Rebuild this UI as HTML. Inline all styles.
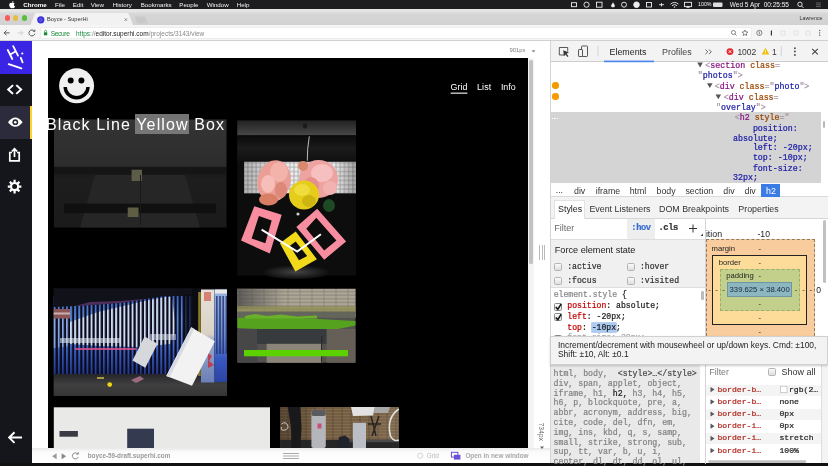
<!DOCTYPE html>
<html><head><meta charset="utf-8"><title>Boyce - SuperHi</title>
<style>
*{box-sizing:border-box;margin:0;padding:0}
html,body{width:828px;height:466px;overflow:hidden;background:#fff}
body{position:relative;will-change:transform;font-family:"Liberation Sans",sans-serif;color:#222}
.a{position:absolute}
.t{position:absolute;white-space:nowrap;line-height:1;font-family:"Liberation Sans",sans-serif}
.m{position:absolute;white-space:pre;line-height:1;font-family:"Liberation Mono",monospace;-webkit-text-stroke:.22px}
.b{font-weight:bold}
svg{position:absolute;overflow:visible}
</style></head><body>
<!-- macOS menu bar -->
<div class="a" style="left:0;top:0;width:828px;height:9.3px;background:#1d1d1f"></div>
<svg style="left:9.3px;top:1.2px" width="6" height="7" viewBox="0 0 14 17"><path fill="#fff" d="M11.6 9c0-2 1.700-3 1.800-3.100-1-1.400-2.500-1.600-3-1.600-1.300-.1-2.500.8-3.200.8-.7 0-1.700-.7-2.800-.7C3 4.400 1.700 5.200 1 6.500-.6 9.200.6 13.200 2.100 15.400c.8 1.100 1.600 2.300 2.800 2.200 1.100 0 1.500-.7 2.900-.7 1.300 0 1.700.7 2.900.7 1.200 0 2-1.100 2.700-2.200.9-1.200 1.200-2.500 1.200-2.500s-2.900-.9-3-3.900zM9.400 2.900C10 2.100 10.400 1.100 10.300 0c-.9 0-2 .6-2.600 1.300-.6.700-1.100 1.700-.9 2.700 1 .1 2-.5 2.600-1.100z"/></svg>
<span class="t b" style="left:23.3px;top:1.5px;font-size:6.2px;color:#fff">Chrome</span>
<span class="t" style="left:55px;top:1.5px;font-size:6.2px;color:#f2f2f2">File</span>
<span class="t" style="left:72.700px;top:1.5px;font-size:6.2px;color:#f2f2f2">Edit</span>
<span class="t" style="left:90.700px;top:1.5px;font-size:6.2px;color:#f2f2f2">View</span>
<span class="t" style="left:112.700px;top:1.5px;font-size:6.2px;color:#f2f2f2">History</span>
<span class="t" style="left:140.700px;top:1.5px;font-size:6.2px;color:#f2f2f2">Bookmarks</span>
<span class="t" style="left:179.300px;top:1.5px;font-size:6.2px;color:#f2f2f2">People</span>
<span class="t" style="left:206.700px;top:1.5px;font-size:6.2px;color:#f2f2f2">Window</span>
<span class="t" style="left:236.700px;top:1.5px;font-size:6.2px;color:#f2f2f2">Help</span>
<!-- menubar right icons -->
<svg style="left:570px;top:0" width="258" height="9.3" viewBox="0 0 258 9.3">
<g fill="none" stroke="#eee" stroke-width="0.9">
<rect x="1.500" y="2.700" width="5" height="4"/><circle cx="16.500" cy="4.700" r="2.600"/><rect x="26.500" y="2.200" width="5.500" height="5"/>
<path d="M42 7.300c-2-1.500 0-3 1-5 1 2 3 3.500 1 5z" fill="#eee" stroke="none"/>
<circle cx="54" cy="4.700" r="2.500"/><circle cx="66.500" cy="4.700" r="2.800" fill="#eee"/><rect x="76.500" y="2.500" width="5" height="4.500"/>
<path d="M89 4.700h5M91.500 3v3.500"/>
<path d="M100.500 4.200a5.500 5.500 0 0 1 8 0M102 5.700a3.500 3.500 0 0 1 5 0"/><circle cx="104.500" cy="7" r=".7" fill="#eee" stroke="none"/>
<rect x="114.500" y="2.300" width="7" height="4.300"/><path d="M116 7.800l2-2 2 2z" fill="#eee" stroke="none"/>
<rect x="143" y="2.500" width="9.500" height="4.500" rx="1" fill="#ddd" stroke="none"/>
<circle cx="230" cy="4.300" r="2.200"/><path d="M231.600 6l1.800 1.800"/>
<path d="M246 3h5M246 4.800h5M246 6.600h5" stroke="#666"/>
</g></svg>
<span class="t" style="left:698px;top:2px;font-size:5.300px;color:#f2f2f2">100%</span>
<span class="t" style="left:729.800px;top:1.900px;font-size:6.500px;color:#f2f2f2">Wed 5 Apr&nbsp; 00:25:55</span>

<!-- tab strip -->
<div class="a" style="left:0;top:9.300px;width:828px;height:16.200px;background:linear-gradient(#e7e7e7 0,#e2e2e2 18%,#d6d6d6 30%,#d2d2d2)"></div>
<div class="a" style="left:7.200px;top:18px;width:5.400px;height:5.400px;margin:-2.700px;border-radius:50%;background:#fc5b57"></div>
<div class="a" style="left:15.700px;top:18px;width:5.400px;height:5.400px;margin:-2.700px;border-radius:50%;background:#e5bf3c"></div>
<div class="a" style="left:24.500px;top:18px;width:5.400px;height:5.400px;margin:-2.700px;border-radius:50%;background:#57c038"></div>
<svg style="left:30px;top:12.500px" width="120" height="13" viewBox="0 0 120 13">
<path d="M0 13 L4.500 1.500 Q5 0 6.500 0 H97 Q98.500 0 99 1.500 L103.500 13 Z" fill="#f2f2f2"/>
<path d="M104.700 3.500h10.500l2.500 7h-10.500z" fill="#c9c9c9"/>
<circle cx="10.800" cy="6.800" r="3.600" fill="#3a30d8"/><circle cx="10.800" cy="6.800" r="1.300" fill="none" stroke="#8f8af0" stroke-width=".6"/>
<path d="M94.600 5.400l2.400 2.400M97 5.400l-2.400 2.400" stroke="#666" stroke-width=".7"/>
</svg>
<span class="t" style="left:47px;top:17.400px;font-size:5.600px;color:#333">Boyce - SuperHi</span>
<span class="t" style="left:799.600px;top:16.300px;font-size:5.300px;color:#333">Lawrence</span>

<!-- toolbar -->
<div class="a" style="left:0;top:25.400px;width:828px;height:15.800px;background:#f5f5f5;border-bottom:1px solid #d0d0d0"></div>
<div class="a" style="left:39.500px;top:27.300px;width:712px;height:11.600px;background:#fff;border-radius:2px;border:.5px solid #ededed"></div>
<svg style="left:0;top:25.400px" width="828" height="15.800" viewBox="0 0 828 15.800">
<g fill="none" stroke="#5a5a5a" stroke-width="1">
<path d="M9.500 7.900H4M6.500 5.400L4 7.900l2.500 2.500"/>
<path d="M17.500 7.900H23M20.500 5.400L23 7.900l-2.500 2.500" stroke="#d0d0d0"/>
<path d="M34.300 6.200A3 3 0 1 0 34.800 8.600" /><path d="M35.200 4.200v2.600h-2.600z" fill="#5a5a5a" stroke="none"/>
</g>
<rect x="43.800" y="7.300" width="3.400" height="3" fill="#1a8a3a"/><path d="M44.500 7.300V6.300a1 1 0 0 1 2 0v1" fill="none" stroke="#1a8a3a" stroke-width=".7"/>
<g fill="none" stroke="#666" stroke-width=".8">
<circle cx="733.500" cy="7.500" r="2"/><path d="M735 9l1.600 1.600"/>
<path d="M745 5l.9 1.900 2 .2-1.500 1.400.4 2-1.800-1-1.800 1 .4-2-1.500-1.400 2-.2z"/>
<circle cx="759.400" cy="7.900" r="2.600"/><path d="M759.400 6.400v3"/>
<path d="M771.500 5.500v5" stroke="#333" stroke-width="1.200"/>
<rect x="781" y="6" width="4" height="4" stroke="#ddd"/><rect x="794" y="6" width="4" height="4" stroke="#e0e0e0"/><rect x="806" y="6" width="4" height="4" stroke="#ddd"/>
</g>
<g fill="#666"><circle cx="819.700" cy="5.500" r=".7"/><circle cx="819.700" cy="7.900" r=".7"/><circle cx="819.700" cy="10.300" r=".7"/></g>
</svg>
<span class="t" style="left:50.700px;top:30.600px;font-size:6.600px;letter-spacing:-.35px;color:#1a8a3a">Secure</span>
<span class="t" style="left:76px;top:30.600px;font-size:6.500px;color:#888"><span style="color:#1a8a3a">https</span>://<span style="color:#222">editor.superhi.com</span>/projects/3143/view</span>
<!-- sidebar -->
<div class="a" style="left:0;top:41.200px;width:32px;height:425px;background:#15151c"></div>
<div class="a" style="left:0;top:41.200px;width:32px;height:32.800px;background:#3a25e4"></div>
<div class="a" style="left:0;top:106.200px;width:32px;height:32.800px;background:#2b2b3b"></div>
<div class="a" style="left:29.500px;top:106.200px;width:2.500px;height:32.800px;background:#ffd22e"></div>
<svg style="left:0;top:41.200px" width="32" height="425" viewBox="0 0 32 425">
<!-- Hi logo -->
<g stroke="#fff" stroke-width="1.800" stroke-linecap="round" fill="none">
<path d="M7.800 9L12.300 18M13.200 5.100L18 14.600M9.900 13.800L15.800 10.200M20.800 16.800L22.600 21.400"/>
<path d="M8.700 23.200L21.400 27.400"/>
</g><circle cx="22.300" cy="12.500" r="1.100" fill="#fff"/>
<!-- code icon -->
<g stroke="#fff" stroke-width="2" fill="none" stroke-linecap="square" stroke-linejoin="miter">
<path d="M12.300 44.800L8.200 48.500l4.100 3.700M17 44.800l4.100 3.700-4.100 3.700"/></g>
<!-- eye -->
<path d="M8 81.200Q15.300 72 22.600 81.200Q15.300 90.400 8 81.200z" fill="#fff"/><circle cx="15.300" cy="81.200" r="2.900" fill="#2b2b3b"/><circle cx="15.300" cy="81.200" r="1.300" fill="#fff"/>
<!-- share -->
<g stroke="#fff" stroke-width="1.700" fill="none"><path d="M12 111.500H9.800v8.300h9.400v-8.300H17"/><path d="M14.500 116V107.800M11.800 110.500l2.700-2.700 2.700 2.700"/></g>
<!-- gear -->
<g transform="translate(14.600 145.600)"><circle r="3.600" fill="none" stroke="#fff" stroke-width="2.200"/>
<g stroke="#fff" stroke-width="2.200"><path d="M0-6.800v2.500M0 6.800v-2.500M-6.800 0h2.500M6.800 0h-2.500M-4.800-4.800l1.800 1.800M4.800 4.800l-1.800-1.800M-4.800 4.800l1.800-1.800M4.800-4.800l-1.800 1.800"/></g></g>
<!-- back arrow -->
<g stroke="#fff" stroke-width="2" fill="none"><path d="M22 396.600H9.500M14.500 391.300l-5.300 5.300 5.300 5.300"/></g>
</svg>
<!-- preview pane -->
<div class="a" style="left:32px;top:41.200px;width:518.500px;height:425px;background:#fff"></div>
<div class="a" style="left:550.300px;top:41.200px;width:1px;height:425px;background:#d4d4d4"></div>
<span class="t" style="left:509.500px;top:47.500px;font-size:5.900px;color:#7a7a7a">901px</span>
<svg style="left:525.200px;top:46.800px" width="12" height="8"><path d="M6.500 3.200h4l-2 2.300z" fill="#888"/></svg>
<!-- scrollbar -->
<div class="a" style="left:528px;top:58px;width:6px;height:390px;background:#f4f4f4"></div>
<div class="a" style="left:529.400px;top:59.700px;width:3.300px;height:204px;background:#c2c2c2;border-radius:1.600px"></div>
<!-- resize handle -->
<div class="a" style="left:539.200px;top:244.700px;width:1.200px;height:15.500px;background:#bbb"></div>
<div class="a" style="left:541.500px;top:244.700px;width:1.200px;height:15.500px;background:#bbb"></div>
<div class="a" style="left:543.800px;top:244.700px;width:1.200px;height:15.500px;background:#bbb"></div>
<span class="t" style="left:541.300px;top:431.900px;font-size:6.300px;letter-spacing:.25px;color:#666;transform:translate(-50%,-50%) rotate(90deg)">734px</span>
<svg style="left:538px;top:444.600px;z-index:3" width="8" height="6"><path d="M2 1.500h4l-2 2.500z" fill="#666"/></svg>

<div class="a" style="left:48px;top:57.700px;width:479.700px;height:390.300px;background:#000;overflow:hidden" id="pg">
<svg style="left:-48px;top:-57.700px" width="828" height="466" viewBox="0 0 828 466">
<defs>
<linearGradient id="g1" x1="0" y1="0" x2="0" y2="1"><stop offset="0" stop-color="#343434"/><stop offset=".43" stop-color="#2c2c2c"/><stop offset=".46" stop-color="#161616"/><stop offset=".56" stop-color="#1e1e1e"/><stop offset="1" stop-color="#1a1a1a"/></linearGradient>
<linearGradient id="gmon" x1="0" y1="0" x2="0" y2="1"><stop offset="0" stop-color="#222"/><stop offset=".75" stop-color="#3e3e3e"/><stop offset="1" stop-color="#4a4a4a"/></linearGradient>
<linearGradient id="gdesk" x1="0" y1="0" x2="0" y2="1"><stop offset="0" stop-color="#0a0a0a"/><stop offset=".5" stop-color="#1b1b1b"/><stop offset="1" stop-color="#101010"/></linearGradient>
<radialGradient id="gglow"><stop offset="0" stop-color="#444"/><stop offset="1" stop-color="#0d0d0d"/></radialGradient>
<linearGradient id="kfade" x1="0" y1="0" x2="1" y2="0"><stop offset="0" stop-color="#000" stop-opacity=".25"/><stop offset=".3" stop-color="#000" stop-opacity="0"/><stop offset=".8" stop-color="#000" stop-opacity="0"/><stop offset="1" stop-color="#000" stop-opacity=".3"/></linearGradient>
<linearGradient id="gfence" x1="0" y1="0" x2="0" y2="1"><stop offset="0" stop-color="#3d68c0"/><stop offset=".3" stop-color="#5b8ad8"/><stop offset=".6" stop-color="#4a72d0"/><stop offset=".75" stop-color="#3558b8"/><stop offset="1" stop-color="#22388a"/></linearGradient>
<pattern id="bars" width="4.100" height="10" patternUnits="userSpaceOnUse" x="53.700"><rect x="1.900" width="2.200" height="10" fill="#0a0a1c"/></pattern>
<pattern id="bars2" width="3.200" height="10" patternUnits="userSpaceOnUse" x="214.400"><rect x="1.600" width="1.600" height="10" fill="#20306a" opacity=".8"/></pattern>
<linearGradient id="gground" x1="0" y1="0" x2="0" y2="1"><stop offset="0" stop-color="#26262a"/><stop offset=".5" stop-color="#404040"/><stop offset="1" stop-color="#343434"/></linearGradient>
<linearGradient id="gpillar" x1="0" y1="0" x2="0" y2="1"><stop offset="0" stop-color="#e6e0da"/><stop offset=".48" stop-color="#d9d2c4"/><stop offset=".55" stop-color="#9aa8c8"/><stop offset="1" stop-color="#6a80b8"/></linearGradient>
<linearGradient id="gdoor" x1="0" y1="0" x2="0" y2="1"><stop offset="0" stop-color="#9ab4e0"/><stop offset=".5" stop-color="#6a8ad0"/><stop offset=".75" stop-color="#3858c0"/><stop offset="1" stop-color="#2a44a0"/></linearGradient>
<pattern id="stripes" width="3.900" height="10" patternUnits="userSpaceOnUse"><rect width="3.900" height="10" fill="#1c2f8a"/><rect x="0" width="1.900" height="10" fill="#c9d4ea"/></pattern>
<pattern id="stripes2" width="3.900" height="10" patternUnits="userSpaceOnUse"><rect width="3.900" height="10" fill="#14143a"/><rect x="0" width="1.700" height="10" fill="#3a62c8"/></pattern>
<pattern id="keys" width="4.200" height="4.400" patternUnits="userSpaceOnUse"><rect width="4.200" height="4.400" fill="#9c9c9c"/><rect x=".35" y=".35" width="3.500" height="3.700" fill="#ececec"/></pattern>
<pattern id="brick" width="9" height="3" patternUnits="userSpaceOnUse"><rect width="9" height="3" fill="#5c4a36"/><rect x=".4" y=".4" width="8.200" height="2.200" fill="#866c4c"/></pattern>
<pattern id="brick2" width="12" height="3.600" patternUnits="userSpaceOnUse"><rect width="12" height="3.600" fill="#87827a"/><rect x=".4" y=".5" width="11.200" height="2.600" fill="#aea796"/></pattern>
<linearGradient id="bshade" x1="0" y1="0" x2="1" y2="0"><stop offset="0" stop-color="#000" stop-opacity=".3"/><stop offset=".35" stop-color="#000" stop-opacity="0"/><stop offset="1" stop-color="#fff" stop-opacity=".08"/></linearGradient>
<linearGradient id="fade" x1="0" y1="0" x2="1" y2="0"><stop offset="0" stop-color="#444" stop-opacity=".75"/><stop offset=".4" stop-color="#444" stop-opacity="0"/></linearGradient>
</defs>
<!-- smiley -->
<circle cx="76.600" cy="85.800" r="17.500" fill="#f0f0f0"/>
<circle cx="70.700" cy="80.400" r="3" fill="#000"/><circle cx="81.400" cy="80.400" r="3" fill="#000"/>
<path d="M63.500 87A13.100 12.400 0 0 0 89.700 87H86.300A9.700 9 0 0 1 66.900 87Z" fill="#000"/>
<!-- nav -->
<rect x="450.600" y="92.600" width="16.800" height="1.100" fill="#fff"/>

<!-- photo1 dark -->
<rect x="54" y="119.500" width="172.500" height="108" fill="url(#g1)"/>

<rect x="54" y="167" width="172.500" height="7" fill="#151515"/><path d="M95 175H185L200 227.500H80Z" fill="#262626"/>
<rect x="64" y="203.600" width="152" height="9.500" fill="#101010"/>
<rect x="131.600" y="169.700" width="10.400" height="11.300" fill="#5c5c49"/>
<rect x="127.700" y="207.500" width="10.800" height="9.500" fill="#5f5e45"/>
<rect x="140" y="175" width="1" height="50" fill="#1a1a1a"/>

<!-- photo2 flowers -->
<rect x="237.300" y="120.500" width="118.700" height="155.100" fill="#0d0d0d"/>
<rect x="237.300" y="120.500" width="118.700" height="14.800" fill="url(#gmon)"/>
<rect x="237.300" y="135.300" width="118.700" height="26" fill="url(#gdesk)"/>
<ellipse cx="305" cy="126" rx="2.200" ry="2.600" fill="#1a1a1a"/>
<ellipse cx="296" cy="272" rx="34" ry="7" fill="url(#gglow)"/>
<rect x="244.100" y="161.800" width="111.900" height="31.500" fill="url(#keys)"/>
<rect x="244.100" y="161.800" width="111.900" height="31.500" fill="url(#kfade)"/>
<path d="M309.300 136.300Q307 150 307.300 160.700" stroke="#cfcfcf" stroke-width=".9" fill="none"/>
<ellipse cx="329" cy="205.500" rx="6" ry="6.500" fill="#1d4a24"/>
<ellipse cx="274" cy="181" rx="16.500" ry="21" fill="#ea9e95" transform="rotate(12 274 181)"/>
<ellipse cx="268.500" cy="199.500" rx="9.500" ry="6" fill="#d97f66"/>
<ellipse cx="279" cy="172" rx="9" ry="10" fill="#f3b3ab"/>
<ellipse cx="268" cy="184" rx="7" ry="9" fill="#f6bdb9"/>
<ellipse cx="281" cy="190" rx="6" ry="8" fill="#dd8878"/>
<ellipse cx="318.500" cy="179" rx="19.500" ry="19" fill="#eda3a0"/>
<ellipse cx="322" cy="173" rx="11" ry="9" fill="#f6c0c0"/>
<ellipse cx="311" cy="186" rx="8" ry="9" fill="#e58f8a"/>
<ellipse cx="330" cy="188" rx="7" ry="7" fill="#f2b2b0"/>
<ellipse cx="303" cy="166" rx="5" ry="5" fill="#d98a6e"/>
<ellipse cx="304" cy="195" rx="15" ry="14.500" fill="#e6cd1a"/>
<ellipse cx="302" cy="190" rx="8" ry="6" fill="#f0dc3c"/>
<ellipse cx="309" cy="201" rx="7" ry="6" fill="#cdb410"/>
<circle cx="298" cy="214" r="1.600" fill="#ccc"/>
<path fill="#f2d91a" fill-rule="evenodd" d="M295.700 231.500L316.900 259.200L295.400 271.600L279.900 243.300ZM295.700 241.500L307.200 256.100L299 260.300L289.900 245.700Z"/>
<path fill="#f88da0" fill-rule="evenodd" d="M254.300 206.300L281.700 214.700L269.800 253.400L241 240.600ZM258.900 216L271.700 220.500L265.300 243.300L251.600 238.400Z"/>
<path fill="#f88da0" fill-rule="evenodd" d="M317.200 208.700L346.100 241.500L324.200 259.700L296.300 226.900ZM316.300 217.800L336.400 240.600L324.200 250.600L306.300 228.700Z"/>
<path d="M261.600 229.700L297.200 251.500L320.900 234.200" fill="none" stroke="#fff" stroke-width="2" stroke-linejoin="miter"/>

<!-- photo3 graffiti -->
<rect x="53.700" y="288.400" width="173.300" height="107.600" fill="#11111a"/>
<rect x="53.700" y="296" width="138.500" height="78.500" fill="url(#gfence)"/>
<path d="M70 322L98 312L140 302L165 297L172 297L176 330L170 344L140 347L100 346L70 344Z" fill="#e4ecf8" opacity=".85"/>
<path d="M53.700 318L70 316V346L53.700 348Z" fill="#9db8e6" opacity=".7"/>
<rect x="53.700" y="296" width="138.500" height="78.500" fill="url(#bars)"/>
<path d="M53.700 288.400H192.200V295.500L165 296L120 303L75 306L53.700 307Z" fill="#11111a"/>
<path d="M75 306L120 303L150 298.500L120 301L90 302Z" fill="#6a3a78" opacity=".7"/>
<rect x="183.600" y="294" width="8.600" height="82" fill="#0c0c18" opacity=".75"/>
<rect x="53.700" y="374" width="173.300" height="22" fill="url(#gground)"/>
<rect x="53.700" y="309" width="16.300" height="9.500" fill="#8d5656"/>
<rect x="53.700" y="312.500" width="16.300" height="2" fill="#c9b0b0"/>
<rect x="192.200" y="288.400" width="6" height="88" fill="#0b0b12"/>
<rect x="198.200" y="292" width="2.600" height="84" fill="#8a7a2a"/>
<rect x="201" y="289.500" width="13.400" height="93" fill="url(#gpillar)"/>
<rect x="204" y="292" width="7" height="9" fill="#d06a5a" opacity=".8"/>
<rect x="214.400" y="289.500" width="12.600" height="92.500" fill="url(#gdoor)"/>
<rect x="214.400" y="296" width="12.600" height="58" fill="url(#bars2)"/>
<rect x="215" y="289.500" width="12" height="4" fill="#e8e8e8"/>
<path d="M208 353l4 3-3 5 5 4-6 3z" fill="#c83040" opacity=".85"/>
<rect x="60" y="338" width="60" height="5" fill="#e8eef8" opacity=".55"/><rect x="150" y="334" width="26" height="6" fill="#e8eef8" opacity=".5"/>
<rect x="74.900" y="348.200" width="61" height="1.600" fill="#e3508c"/>
<path d="M144.600 336.600L157.500 343.800L145.300 367.800L132.500 360.500Z" fill="#d6d8dc"/>
<path d="M191.300 327.300L214.900 341.200L192 385.700L166.300 376Z" fill="#f2f2f2"/>
<path d="M191.300 327.300L194.300 329L169.600 377.300L166.300 376Z" fill="#d9dbe2"/>
<circle cx="109.700" cy="384.600" r="3.300" fill="#3a3a2a"/><circle cx="109.700" cy="384.600" r="2.400" fill="#f0d41c"/>
<rect x="97" y="377" width="7" height="2" fill="#a89a40"/>
<path d="M131 380l9-4 4 3-8 4z" fill="#9a6a80"/>

<!-- photo4 grass -->
<rect x="237.300" y="288.800" width="118.200" height="73.900" fill="#54524f"/>
<rect x="237.300" y="288.800" width="118.200" height="29" fill="url(#brick2)"/>
<rect x="237.300" y="288.800" width="118.200" height="20" fill="url(#fade)"/>
<rect x="237.300" y="306" width="118.200" height="6" fill="#8f8c52" opacity=".75"/>
<rect x="237.300" y="311.500" width="118.200" height="6.500" fill="#5d5f55" opacity=".9"/>
<path d="M237.300 318L262 316.500L300 318L355.500 321V325.500L338 329L280 330L237.300 328Z" fill="#55a21e"/>
<path d="M245 316l10-2 12 2 14-1.500 16 2 20-1v3H245z" fill="#6ab02a"/>
<rect x="237.300" y="329" width="20" height="33.700" fill="#474747"/>
<rect x="326.500" y="329" width="29" height="33.700" fill="#665f58"/>
<rect x="257" y="329" width="69.500" height="15" fill="#373b3d"/>
<rect x="266.700" y="343.800" width="56" height="19" fill="#8b8579"/>
<rect x="321" y="336" width="1.500" height="26.700" fill="#2a2a2a"/>
<rect x="244" y="350" width="104" height="6.300" fill="#5bd200"/>

<!-- photo5 wall -->
<rect x="53.800" y="407.300" width="216.200" height="41" fill="#e9e9e8"/>
<rect x="127.200" y="428.700" width="26.800" height="20" fill="#343a4f"/>
<rect x="59.500" y="431" width="18.400" height="5.700" fill="#3a3a44"/>
<!-- photo6 brick -->
<rect x="280.100" y="407" width="118.700" height="41" fill="url(#brick)"/>
<rect x="280.100" y="407" width="118.700" height="41" fill="url(#bshade)"/>
<rect x="280.100" y="439.700" width="118.700" height="8.300" fill="#262626"/>
<rect x="340" y="439.700" width="58.800" height="2.500" fill="#4a4a4a"/>
<path d="M281.500 424q4-3 6 1t-3 5q-4 1-3-3" stroke="#c8c8c8" stroke-width="1" fill="none"/>
<path d="M287.800 407H300.400L301.500 428L300.300 448H291.500L291 428Z" fill="#19191b"/>
<rect x="311.400" y="410" width="14.400" height="38" rx="2" fill="#b4b6bb"/>
<rect x="311.400" y="410" width="14.400" height="6" rx="2" fill="#5a5c60"/>
<rect x="317.500" y="423.500" width="4" height="5" fill="#c8507a"/>
<rect x="352.900" y="422.800" width="13.100" height="25.200" fill="#bcbec6"/>
<path d="M351 407H375L373 415.500L353 416Z" fill="#e2e2e2"/>
<path d="M375 407H390L388 413H374Z" fill="#a8a8a8"/>
<path d="M337.600 448L339 437L345 435.500L349.500 439V448Z" fill="#20222c"/>
<path d="M371 416L376 436M379 416L372 436M368 424H381" stroke="#2a2420" stroke-width="1.500" fill="none"/>
<path d="M398.800 409Q386 418 390.500 436Q393.500 442 398.800 440" stroke="#e0e0e0" stroke-width="1.600" fill="none"/>
</svg>
<!-- nav text -->
<span class="t" style="left:402.600px;top:25px;font-size:8.900px;color:#fff">Grid</span>
<span class="t" style="left:428.900px;top:25px;font-size:8.900px;color:#fff;letter-spacing:.2px">List</span>
<span class="t" style="left:452.900px;top:25px;font-size:8.900px;color:#fff">Info</span>
</div>

<div class="a" style="left:135px;top:114px;width:53.600px;height:19.600px;background:rgba(125,125,125,.92)"></div>
<span class="t" id="ttl" style="left:46px;top:117.200px;font-size:16px;color:#fff;letter-spacing:1.120px;clip-path:inset(0 0 0 1.200px)">Black Line Yellow Box</span>

<!-- bottom bar -->
<div class="a" style="left:32px;top:448px;width:518.300px;height:15.400px;background:linear-gradient(#e9e9e9,#fbfbfb 25%,#fff)"></div>
<div class="a" style="left:0;top:463.400px;width:828px;height:2.600px;background:#111"></div>
<svg style="left:32px;top:448px" width="518" height="15.400" viewBox="0 0 518 15.400">
<path d="M24.500 5.200v6l-4.500-3z" fill="#999"/><path d="M29.500 5.200v6l4.500-3z" fill="#888"/>
<path d="M45.500 6A3 3 0 1 0 46 9" fill="none" stroke="#888" stroke-width="1"/><path d="M46.600 3.800v2.800h-2.800z" fill="#888"/>
<path d="M251 5.500h16M251 8h16M251 10.500h16" stroke="#aaa" stroke-width="1"/>
<circle cx="388.300" cy="7.700" r="2.600" fill="none" stroke="#ccc" stroke-width=".8"/>
<rect x="419.500" y="4.300" width="6.500" height="4.800" fill="none" stroke="#6b4fd8" stroke-width="1"/><rect x="422" y="6.800" width="6.500" height="4.800" fill="#6b4fd8"/>
</svg>
<span class="t b" style="left:87.700px;top:453.100px;font-size:6.300px;color:#999">boyce-59-draft.superhi.com</span>
<span class="t" style="left:426.700px;top:452.600px;font-size:6.400px;color:#bbb">Grid</span>
<span class="t b" style="left:465.400px;top:452.600px;font-size:6.400px;color:#a8a8a8">Open in new window</span>
<!-- devtools -->
<div class="a" style="left:551px;top:41.200px;width:277px;height:422.200px;background:#fff"></div>
<!-- toolbar -->
<div class="a" style="left:551px;top:41px;width:277px;height:21px;background:#f3f3f3;border-bottom:1px solid #cdcdcd"></div>
<div class="a" style="left:603.500px;top:60px;width:50.500px;height:1px;background:#a9c4f5"></div><div class="a" style="left:603.500px;top:61px;width:50.500px;height:1px;background:#4a86ee"></div><div class="a" style="left:603.500px;top:62px;width:50.500px;height:1px;background:#d5e2fb"></div>
<svg style="left:551px;top:41.200px" width="277" height="20.300" viewBox="0 0 277 20.300">
<g fill="none" stroke="#444" stroke-width=".9">
<path d="M14.500 14H8.300V6.500h8.400v4" stroke-dasharray="none"/>
<path d="M12.200 9.200l5.800 2.400-2.400 1 1.800 2.600-1 .7-1.800-2.600-1.700 1.700z" fill="#333" stroke="none"/>
<rect x="30.500" y="5" width="6" height="10.500" rx=".8"/><rect x="27.500" y="8.500" width="4" height="7" rx=".6" fill="#f3f3f3"/>
</g>
<path d="M47 5v10.500M230.300 5v10.500" stroke="#ccc" stroke-width=".8"/>
<circle cx="179" cy="10.600" r="3.400" fill="#e0282e"/><path d="M177.700 9.300l2.600 2.600M180.300 9.300l-2.600 2.600" stroke="#fff" stroke-width=".9"/>
<path d="M214.500 6.800l3.800 6.800h-7.600z" fill="#f4bd00"/><path d="M214.500 9.300v2.300M214.500 12.300v.7" stroke="#fff" stroke-width=".8"/>
<g fill="#555"><circle cx="243.900" cy="7.300" r="1"/><circle cx="243.900" cy="10.600" r="1"/><circle cx="243.900" cy="13.900" r="1"/></g>
<path d="M261.200 7.800l5.600 5.600M266.800 7.800l-5.600 5.600" stroke="#444" stroke-width="1.100"/>
<path d="M154.500 8.500l2.300 2.300-2.300 2.300M158 8.500l2.300 2.300-2.300 2.300" stroke="#555" stroke-width=".9" fill="none"/>
</svg>
<span class="t" style="left:609.500px;top:47.600px;font-size:8.900px;color:#222">Elements</span>
<span class="t" style="left:662px;top:47.600px;font-size:8.900px;color:#444">Profiles</span>
<span class="t" style="left:737.400px;top:47.800px;font-size:8.500px;color:#333">1002</span>
<span class="t" style="left:772px;top:47.800px;font-size:8.500px;color:#333">1</span>

<!-- DOM tree -->
<div class="a" style="left:551px;top:112.300px;width:269.500px;height:71px;background:#d4d4d4"></div>
<div class="a" style="left:552.200px;top:85.500px;width:6.400px;height:6.400px;margin-top:-3.200px;border-radius:50%;background:#f59b00"></div>
<div class="a" style="left:552.200px;top:96.600px;width:6.400px;height:6.400px;margin-top:-3.200px;border-radius:50%;background:#f59b00"></div>
<div class="a" style="left:552px;top:117.800px;width:6px;height:1px;background:repeating-linear-gradient(90deg,#fff 0 1.200px,transparent 1.200px 2.400px)"></div>
<div class="a" style="left:822.500px;top:120.500px;width:2.800px;height:7.500px;background:#b8b8b8;border-radius:1.400px"></div>
<svg style="left:0;top:0" width="828" height="200"><g fill="#555">
<path d="M697.300 62.600h5.600l-2.800 4.800z"/><path d="M707 83.300h5.600l-2.800 4.800z"/><path d="M715.500 94.400h5.600l-2.800 4.800z"/></g></svg>
<div id="dom" class="a" style="left:0;top:1.500px;font-size:8.300px;color:#1a1aa6">
<span class="m" style="left:705.300px;top:60.400px"><span style="color:#a894a6">&lt;</span><span style="color:#881280">section</span> <span style="color:#994500">class</span><span style="color:#a894a6">=</span></span>
<span class="m" style="left:697.800px;top:70.300px"><span style="color:#a894a6">"</span>photos<span style="color:#a894a6">"&gt;</span></span>
<span class="m" style="left:714.700px;top:81px"><span style="color:#a894a6">&lt;</span><span style="color:#881280">div</span> <span style="color:#994500">class</span><span style="color:#a894a6">="</span>photo<span style="color:#a894a6">"&gt;</span></span>
<span class="m" style="left:723.800px;top:92.200px"><span style="color:#a894a6">&lt;</span><span style="color:#881280">div</span> <span style="color:#994500">class</span><span style="color:#a894a6">=</span></span>
<span class="m" style="left:716px;top:102px"><span style="color:#a894a6">"</span>overlay<span style="color:#a894a6">"&gt;</span></span>
<span class="m" style="left:734.700px;top:112.800px"><span style="color:#a894a6">&lt;</span><span style="color:#881280">h2</span> <span style="color:#994500">style</span><span style="color:#a894a6">="</span></span>
<span class="m" style="left:752.900px;top:123.300px">position:</span>
<span class="m" style="left:733px;top:133.100px">absolute;</span>
<span class="m" style="left:752.900px;top:142.800px">left: -20px;</span>
<span class="m" style="left:752.900px;top:152.800px">top: -10px;</span>
<span class="m" style="left:752.900px;top:163px">font-size:</span>
<span class="m" style="left:733px;top:172.800px">32px;</span>
</div>

<!-- breadcrumbs -->
<div class="a" style="left:551px;top:183px;width:277px;height:14px;background:#fff;border-bottom:1px solid #dadada"></div>
<div class="a" style="left:761px;top:184.200px;width:19px;height:13px;background:#3b7be6"></div>
<div style="font-size:8.800px;color:#333">
<span class="t" style="left:555.700px;top:186.300px">...</span>
<span class="t" style="left:574px;top:186.800px">div</span>
<span class="t" style="left:595.700px;top:186.800px">iframe</span>
<span class="t" style="left:629.700px;top:186.800px">html</span>
<span class="t" style="left:656.500px;top:186.800px">body</span>
<span class="t" style="left:685.400px;top:186.800px">section</span>
<span class="t" style="left:723.300px;top:186.800px">div</span>
<span class="t" style="left:744.500px;top:186.800px">div</span>
<span class="t" style="left:766px;top:186.800px;color:#fff">h2</span>
</div>

<!-- sidebar tabs -->
<div class="a" style="left:551px;top:197px;width:277px;height:21.500px;background:#f3f3f3;border-bottom:1px solid #d6d6d6"></div>
<div class="a" style="left:553.700px;top:200px;width:31.700px;height:18.500px;background:#fff;border:1px solid #e2e2e2;border-bottom:none"></div>
<div style="font-size:8.900px;color:#333">
<span class="t" style="left:558px;top:205.100px;color:#222">Styles</span>
<span class="t" style="left:589.400px;top:205.100px">Event Listeners</span>
<span class="t" style="left:659px;top:205.100px">DOM Breakpoints</span>
<span class="t" style="left:738.300px;top:205.100px">Properties</span>
</div>

<!-- styles pane -->
<div class="a" style="left:705px;top:218.300px;width:1px;height:246px;background:#d4d4d4"></div>
<div class="a" style="left:627.400px;top:219.300px;width:27.600px;height:19.500px;background:#eee"></div>
<span class="t" style="left:554.200px;top:224.300px;font-size:9px;color:#6a6a6a">Filter</span>
<span class="m b" style="left:631.300px;top:224.200px;font-size:8.800px;letter-spacing:-.45px;color:#3a6fd0">:hov</span>
<span class="m b" style="left:658.500px;top:224.200px;font-size:8.800px;letter-spacing:-.45px;color:#333">.cls</span>
<svg style="left:688px;top:222px" width="18" height="16"><path d="M5 2.500v8M1 6.500h8" stroke="#333" stroke-width="1"/><path d="M15 11.500v2.500h-2.500z" fill="#444"/></svg>
<div class="a" style="left:551px;top:238.800px;width:154px;height:49.500px;background:#f0f0f0;border-top:1px solid #ddd;border-bottom:1px solid #ddd"></div>
<span class="t" style="left:554.800px;top:246.300px;font-size:9.150px;color:#222">Force element state</span>
<div class="a cb" style="left:554.200px;top:263px"></div><div class="a cb" style="left:554.200px;top:276.500px"></div>
<div class="a cb" style="left:627.200px;top:263px"></div><div class="a cb" style="left:627.200px;top:276.500px"></div>
<style>.cb{width:8px;height:8px;border:.8px solid #b4b4b4;border-radius:1.500px;background:linear-gradient(#fafafa,#dedede)}
.ck{width:8.400px;height:8.200px;border:.8px solid #8a8a8a;border-radius:1.500px;background:linear-gradient(#fafafa,#dedede)}</style>
<div style="font-size:8.170px;color:#333">
<span class="m" style="left:567.200px;top:262.800px">:active</span>
<span class="m" style="left:567.200px;top:276.800px">:focus</span>
<span class="m" style="left:639.900px;top:262.800px">:hover</span>
<span class="m" style="left:639.900px;top:276.800px">:visited</span>
</div>
<div class="a" style="left:701.300px;top:290.800px;width:2.600px;height:9px;background:#bbb;border-radius:1.300px"></div>
<div style="font-size:8.150px;color:#222">
<span class="m" style="left:553.700px;top:291.200px"><span style="color:#888">element.style</span> {</span>
<span class="m" style="left:567.300px;top:302.300px"><span style="color:#c80000">position</span>: absolute;</span>
<span class="m" style="left:567.300px;top:313px"><span style="color:#c80000">left</span>: -20px;</span>
<span class="m" style="left:567.300px;top:324.100px"><span style="color:#c80000">top</span>: <span style="background:#accbf3;box-shadow:0 0 0 .6px #8db0e6">-10px</span>;</span>
<span class="m" style="left:567.300px;top:334.300px;color:#aaa">font-size: 32px;</span>
</div>
<div class="a ck" style="left:553.700px;top:302.500px"></div><div class="a ck" style="left:553.700px;top:312.900px"></div><div class="a ck" style="left:553.700px;top:334.500px"></div>
<svg style="left:553.700px;top:302.500px" width="9" height="20"><path d="M1.800 4l2 2.300L7.200.8M1.800 14.400l2 2.300 3.400-5.500" stroke="#111" stroke-width="1.500" fill="none"/></svg>

<!-- box model -->
<span class="t" style="left:705.900px;top:230px;font-size:8.800px;color:#222">ition</span>
<span class="t" style="left:757.500px;top:230px;font-size:8.600px;color:#222">-10</span>
<span class="t" style="left:816.300px;top:286px;font-size:8.600px;color:#222">0</span>
<div class="a" style="left:705.700px;top:239.400px;width:109.100px;height:102px;background:#f9cc9d;border:1px dashed rgba(0,0,0,.4)"></div>
<div class="a" style="left:712.400px;top:254.800px;width:94.200px;height:70.400px;background:#fddc9a;border:1px solid #222"></div>
<div class="a" style="left:720px;top:268.500px;width:80px;height:42.900px;background:#c3d08b;border:1px dashed rgba(90,110,50,.35)"></div>
<div class="a" style="left:726.500px;top:282px;width:65.700px;height:15.300px;background:#8cb6c0;border:1px solid rgba(70,110,125,.45)"></div>
<div class="a" style="left:823.300px;top:220px;width:3.200px;height:63px;background:#c1c1c1;border-radius:1.600px"></div>
<div style="font-size:7.700px;color:#222">
<span class="t" style="left:711.600px;top:244.600px">margin</span><span class="t" style="left:758.500px;top:244.600px">-</span>
<span class="t" style="left:718.700px;top:258.500px">border</span><span class="t" style="left:758.500px;top:258.500px">-</span>
<span class="t" style="left:726.300px;top:272.400px">padding</span><span class="t" style="left:758.500px;top:272.400px">-</span>
<span class="t" style="left:729.600px;top:285.900px;font-size:7.700px;color:#1a2a3a">339.625 × 38.400</span>
<span class="t" style="left:758.500px;top:300px">-</span><span class="t" style="left:758.500px;top:314px">-</span><span class="t" style="left:758.500px;top:328px">-</span>
<span class="t" style="left:708.300px;top:286px">-</span><span class="t" style="left:715.300px;top:286px">-</span><span class="t" style="left:722.300px;top:286px">-</span>
<span class="t" style="left:794.800px;top:286px">-</span><span class="t" style="left:802.300px;top:286px">-</span><span class="t" style="left:809.500px;top:286px">-</span>
</div>

<!-- lower-left: UA stylesheet selectors -->
<div class="a" style="left:551px;top:364px;width:148.500px;height:99.400px;background:#e9e9e9"></div>
<div style="font-size:8.240px;color:#838383">
<span class="m" style="left:553.500px;top:369.90px">html, body,  <span style="color:#4a4a4a">&lt;style&gt;…&lt;/style&gt;</span></span>
<span class="m" style="left:553.500px;top:379.71px">div, span, applet, object,</span>
<span class="m" style="left:553.500px;top:389.52px">iframe, h1, <span style="color:#1a1a1a">h2,</span> h3, h4, h5,</span>
<span class="m" style="left:553.500px;top:399.33px">h6, p, blockquote, pre, a,</span>
<span class="m" style="left:553.500px;top:409.14px">abbr, acronym, address, big,</span>
<span class="m" style="left:553.500px;top:418.95px">cite, code, del, dfn, em,</span>
<span class="m" style="left:553.500px;top:428.76px">img, ins, kbd, q, s, samp,</span>
<span class="m" style="left:553.500px;top:438.57px">small, strike, strong, sub,</span>
<span class="m" style="left:553.500px;top:448.38px">sup, tt, var, b, u, i,</span>
<span class="m" style="left:553.500px;top:458.19px">center, dl, dt, dd, ol, ul,</span>
</div>

<!-- computed -->
<div class="a" style="left:706px;top:384.500px;width:114.500px;height:11px;background:#f4f4f4"></div>
<div class="a" style="left:706px;top:408.800px;width:114.500px;height:11px;background:#f4f4f4"></div>
<div class="a" style="left:706px;top:433px;width:114.500px;height:11px;background:#f4f4f4"></div>
<div class="a" style="left:820.500px;top:364px;width:7.500px;height:99.400px;background:#f4f4f4;border-left:1px solid #dedede"></div>
<span class="t" style="left:709.500px;top:367.600px;font-size:8.700px;color:#777">Filter</span>
<div class="a cb" style="left:767.500px;top:368.300px"></div>
<span class="t" style="left:781.500px;top:367.500px;font-size:9px;color:#333">Show all</span>
<svg style="left:705px;top:380px" width="123" height="86"><g fill="#555">
<path d="M5.500 7v5.200l4-2.600z"/><path d="M5.500 19.200v5.200l4-2.600z"/><path d="M5.500 31.400v5.200l4-2.600z"/><path d="M5.500 43.600v5.200l4-2.600z"/><path d="M5.500 55.800v5.200l4-2.600z"/><path d="M5.500 68v5.200l4-2.600z"/></g>
<rect x="75.500" y="6.200" width="6.500" height="6.500" fill="#fff" stroke="#bbb" stroke-width=".7"/>
<rect x="3.200" y="80.200" width="98" height="2.800" rx="1.400" fill="#c1c1c1"/>
</svg>
<div style="font-size:8.100px;color:#222">
<span class="m" style="left:717.400px;top:385.500px;color:#b0281e">border-b…</span><span class="m" style="left:789px;top:385.500px">rgb(2…</span>
<span class="m" style="left:717.400px;top:397.700px;color:#b0281e">border-b…</span><span class="m" style="left:779.500px;top:397.700px">none</span>
<span class="m" style="left:717.400px;top:409.900px;color:#b0281e">border-b…</span><span class="m" style="left:779.500px;top:409.900px">0px</span>
<span class="m" style="left:717.400px;top:422.100px;color:#b0281e">border-i…</span><span class="m" style="left:779.500px;top:422.100px">0px</span>
<span class="m" style="left:717.400px;top:434.300px;color:#b0281e">border-i…</span><span class="m" style="left:779.500px;top:434.300px">stretch</span>
<span class="m" style="left:717.400px;top:446.500px;color:#b0281e">border-i…</span><span class="m" style="left:779.500px;top:446.500px">100%</span>
</div>

<!-- tooltip -->
<div class="a" style="left:550px;top:335.600px;width:278px;height:29px;background:#f3f3f3;border:1px solid #d0d0d0;box-shadow:0 1px 2px rgba(0,0,0,.2)"></div>
<span class="t" style="left:558px;top:340.600px;font-size:8.440px;color:#222">Increment/decrement with mousewheel or up/down keys. Cmd: ±100,</span>
<span class="t" style="left:558px;top:350.400px;font-size:8.440px;color:#222">Shift: ±10, Alt: ±0.1</span>
</body></html>
